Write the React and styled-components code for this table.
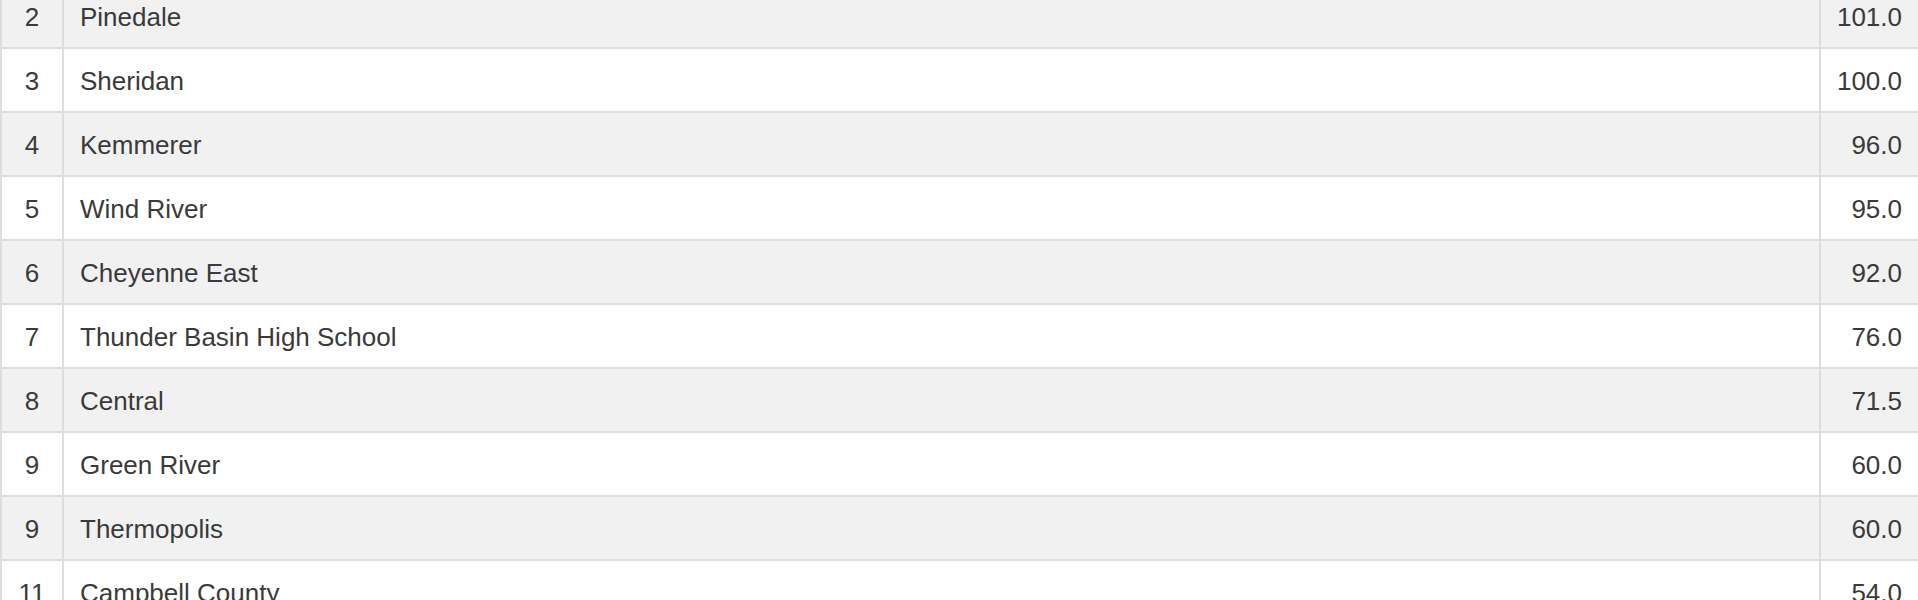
import React from "react";
import styled, { createGlobalStyle } from "styled-components";

const ROWS = [
  { rank: 2, team: "Pinedale", points: "101.0" },
  { rank: 3, team: "Sheridan", points: "100.0" },
  { rank: 4, team: "Kemmerer", points: "96.0" },
  { rank: 5, team: "Wind River", points: "95.0" },
  { rank: 6, team: "Cheyenne East", points: "92.0" },
  { rank: 7, team: "Thunder Basin High School", points: "76.0" },
  { rank: 8, team: "Central", points: "71.5" },
  { rank: 9, team: "Green River", points: "60.0" },
  { rank: 9, team: "Thermopolis", points: "60.0" },
  { rank: 11, team: "Campbell County", points: "54.0" },
];

const GlobalStyle = createGlobalStyle`
  html, body {
    margin: 0;
    padding: 0;
    background: #fff;
    overflow: hidden;
  }
  body {
    font-family: "Liberation Sans", Arial, Helvetica, sans-serif;
    color: #3a3a3a;
  }
`;

const Table = styled.div`
  width: 100%;
  margin-top: -17px;
`;

const Row = styled.div`
  display: grid;
  grid-template-columns: 62px 1fr 99px;
  height: 64px;
  border-top: 2px solid #ddd;
  box-sizing: border-box;
  background: ${(p) => (p.$striped ? "#f1f1f1" : "#fff")};
`;

const Cell = styled.div`
  display: flex;
  align-items: center;
  border-left: 2px solid #ddd;
  padding: 2px 16px 0;
  font-size: 26px;
  line-height: 1;
  white-space: nowrap;
  justify-content: ${(p) =>
    p.$align === "center" ? "center" : p.$align === "right" ? "flex-end" : "flex-start"};
  ${(p) => p.$align === "center" && "padding-left: 0; padding-right: 0;"}
`;

const App = () => {
  return (
    <>
      <GlobalStyle />
      <Table>
        {ROWS.map((row, i) => (
          <Row key={row.team} $striped={i % 2 === 0}>
            <Cell $align="center">{row.rank}</Cell>
            <Cell>{row.team}</Cell>
            <Cell $align="right">{row.points}</Cell>
          </Row>
        ))}
      </Table>
    </>
  );
};

export default App;
